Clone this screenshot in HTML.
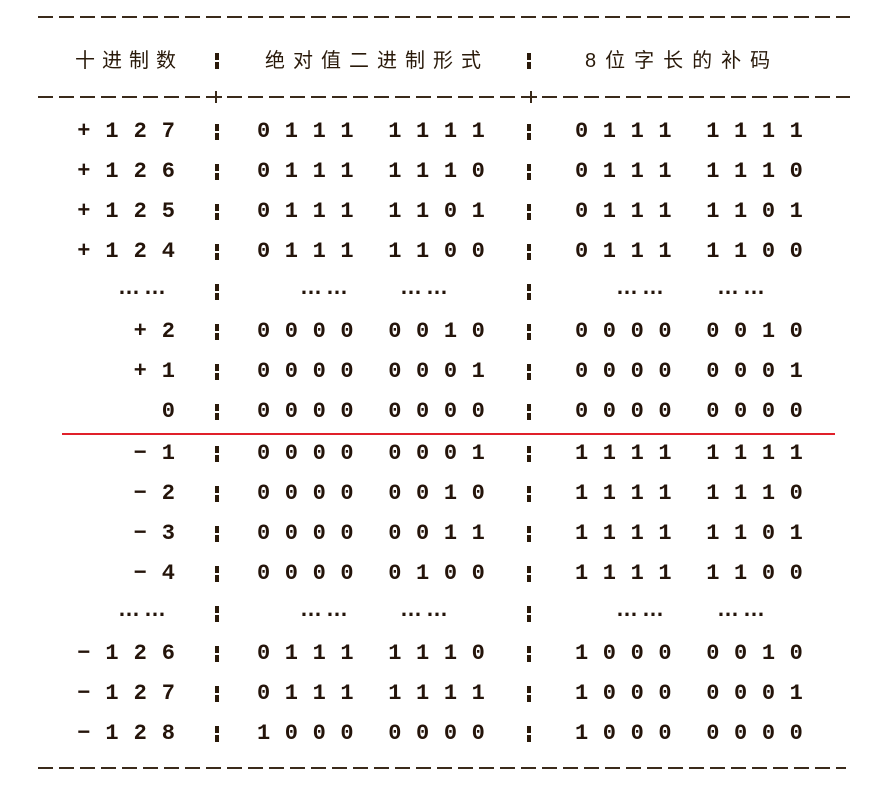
<!DOCTYPE html>
<html><head><meta charset="utf-8"><style>
html,body{margin:0;padding:0;background:#fff;width:890px;height:788px;overflow:hidden;position:relative}
.d{position:absolute;height:2px;background:repeating-linear-gradient(90deg,#3a2a1a 0 15px,transparent 15px 21px)}
.r{position:absolute;left:0;width:890px;height:40px;font-family:"Liberation Mono",monospace;font-weight:bold;font-size:22px;color:#24140a;line-height:40px}
.r span{position:absolute;top:0;white-space:pre}
.c1{right:700px;text-align:right;letter-spacing:15px}
.c2{left:257px;letter-spacing:14.6px}
.c3{left:575px;letter-spacing:14.6px}
.g{display:inline-block;width:20px}
.sep{position:absolute;width:4px;height:16px;top:12px;background:repeating-linear-gradient(180deg,#2a1a0a 0 7px,transparent 7px 9px)}
.r span.dots{font-family:"Liberation Sans",sans-serif;font-size:22px;letter-spacing:4px;top:-5px;font-weight:bold}
.h{position:absolute;top:41px;font-family:"Liberation Sans","Noto Sans CJK SC",sans-serif;font-size:20px;color:#2a1a0a;line-height:40px;white-space:pre}
</style></head><body>
<div class="d" style="left:38px;width:812px;top:16px"></div>
<div class="h" style="left:75px;letter-spacing:7px">十进制数</div>
<div class="h" style="left:265px;letter-spacing:8px">绝对值二进制形式</div>
<div class="h" style="left:585px;letter-spacing:9px">8位字长的补码</div>
<div class="sep" style="left:215px;top:53px"></div>
<div class="sep" style="left:527px;top:53px"></div>
<div class="d" style="left:38px;width:812px;top:96px"></div>
<div style="position:absolute;left:210px;top:96px;width:12px;height:2px;background:#3a2a1a"></div>
<div style="position:absolute;left:215px;top:91px;width:2px;height:12px;background:#3a2a1a"></div>
<div style="position:absolute;left:525px;top:96px;width:12px;height:2px;background:#3a2a1a"></div>
<div style="position:absolute;left:530px;top:91px;width:2px;height:12px;background:#3a2a1a"></div>

<div class="r" style="top:112px"><span class="c1">+127</span><i class="sep" style="left:215px"></i><span class="c2">0111<i class="g"></i>1111</span><i class="sep" style="left:527px"></i><span class="c3">0111<i class="g"></i>1111</span></div>
<div class="r" style="top:152px"><span class="c1">+126</span><i class="sep" style="left:215px"></i><span class="c2">0111<i class="g"></i>1110</span><i class="sep" style="left:527px"></i><span class="c3">0111<i class="g"></i>1110</span></div>
<div class="r" style="top:192px"><span class="c1">+125</span><i class="sep" style="left:215px"></i><span class="c2">0111<i class="g"></i>1101</span><i class="sep" style="left:527px"></i><span class="c3">0111<i class="g"></i>1101</span></div>
<div class="r" style="top:232px"><span class="c1">+124</span><i class="sep" style="left:215px"></i><span class="c2">0111<i class="g"></i>1100</span><i class="sep" style="left:527px"></i><span class="c3">0111<i class="g"></i>1100</span></div>
<div class="r" style="top:272px"><span class="dots" style="left:118px">……</span><i class="sep" style="left:215px"></i><span class="dots" style="left:300px">……</span><span class="dots" style="left:400px">……</span><i class="sep" style="left:527px"></i><span class="dots" style="left:616px">……</span><span class="dots" style="left:717px">……</span></div>
<div class="r" style="top:312px"><span class="c1">+2</span><i class="sep" style="left:215px"></i><span class="c2">0000<i class="g"></i>0010</span><i class="sep" style="left:527px"></i><span class="c3">0000<i class="g"></i>0010</span></div>
<div class="r" style="top:352px"><span class="c1">+1</span><i class="sep" style="left:215px"></i><span class="c2">0000<i class="g"></i>0001</span><i class="sep" style="left:527px"></i><span class="c3">0000<i class="g"></i>0001</span></div>
<div class="r" style="top:392px"><span class="c1">0</span><i class="sep" style="left:215px"></i><span class="c2">0000<i class="g"></i>0000</span><i class="sep" style="left:527px"></i><span class="c3">0000<i class="g"></i>0000</span></div>
<div style="position:absolute;left:62px;width:773px;top:433px;height:2px;background:#e0202a"></div>
<div class="r" style="top:434px"><span class="c1">−1</span><i class="sep" style="left:215px"></i><span class="c2">0000<i class="g"></i>0001</span><i class="sep" style="left:527px"></i><span class="c3">1111<i class="g"></i>1111</span></div>
<div class="r" style="top:474px"><span class="c1">−2</span><i class="sep" style="left:215px"></i><span class="c2">0000<i class="g"></i>0010</span><i class="sep" style="left:527px"></i><span class="c3">1111<i class="g"></i>1110</span></div>
<div class="r" style="top:514px"><span class="c1">−3</span><i class="sep" style="left:215px"></i><span class="c2">0000<i class="g"></i>0011</span><i class="sep" style="left:527px"></i><span class="c3">1111<i class="g"></i>1101</span></div>
<div class="r" style="top:554px"><span class="c1">−4</span><i class="sep" style="left:215px"></i><span class="c2">0000<i class="g"></i>0100</span><i class="sep" style="left:527px"></i><span class="c3">1111<i class="g"></i>1100</span></div>
<div class="r" style="top:594px"><span class="dots" style="left:118px">……</span><i class="sep" style="left:215px"></i><span class="dots" style="left:300px">……</span><span class="dots" style="left:400px">……</span><i class="sep" style="left:527px"></i><span class="dots" style="left:616px">……</span><span class="dots" style="left:717px">……</span></div>
<div class="r" style="top:634px"><span class="c1">−126</span><i class="sep" style="left:215px"></i><span class="c2">0111<i class="g"></i>1110</span><i class="sep" style="left:527px"></i><span class="c3">1000<i class="g"></i>0010</span></div>
<div class="r" style="top:674px"><span class="c1">−127</span><i class="sep" style="left:215px"></i><span class="c2">0111<i class="g"></i>1111</span><i class="sep" style="left:527px"></i><span class="c3">1000<i class="g"></i>0001</span></div>
<div class="r" style="top:714px"><span class="c1">−128</span><i class="sep" style="left:215px"></i><span class="c2">1000<i class="g"></i>0000</span><i class="sep" style="left:527px"></i><span class="c3">1000<i class="g"></i>0000</span></div>
<div class="d" style="left:38px;width:808px;top:767px"></div>
</body></html>
